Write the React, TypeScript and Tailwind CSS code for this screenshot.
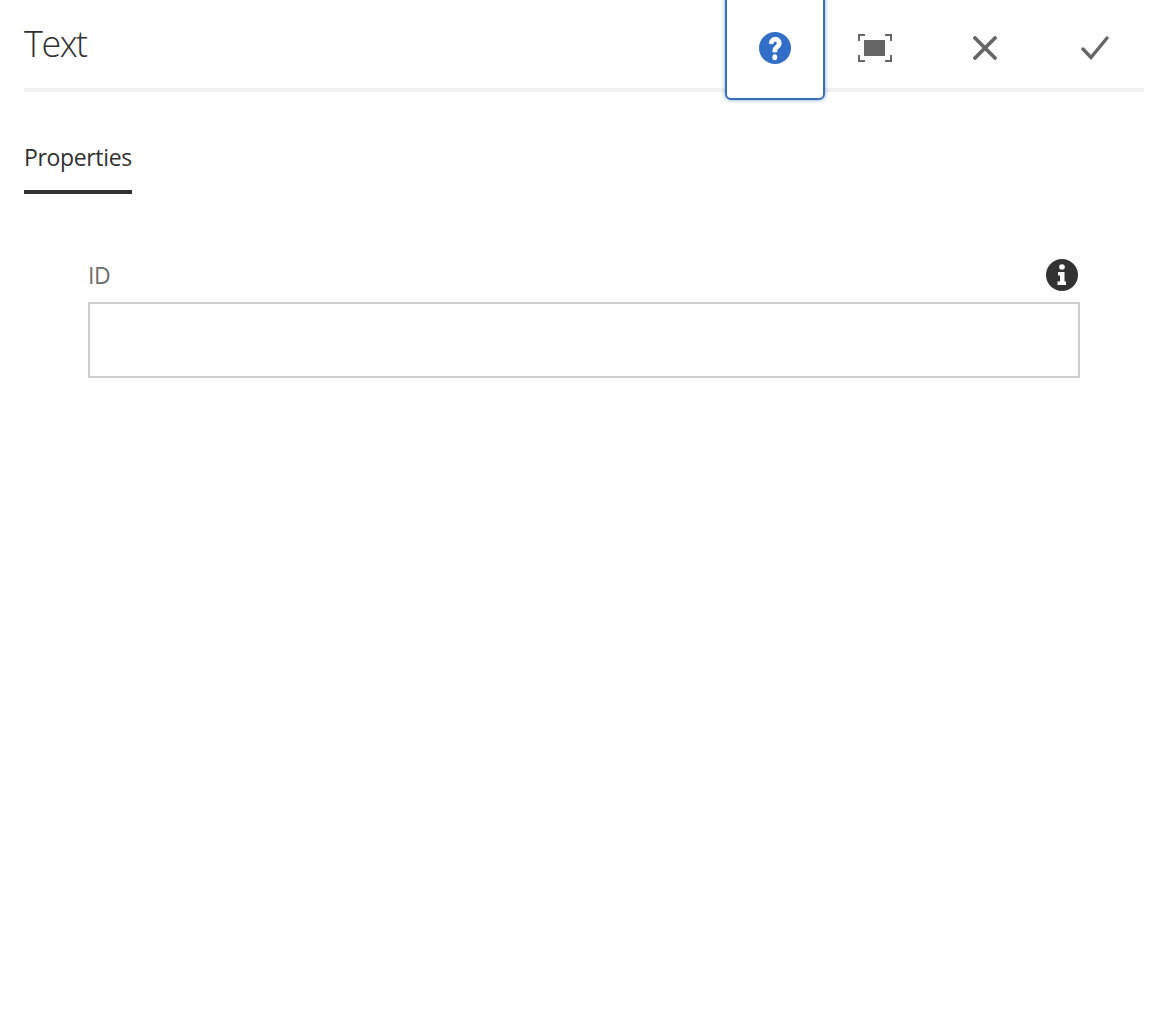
const font = { fontFamily: '"Open Sans", sans-serif' };

const HelpIcon = () => (
  <svg width="32" height="32" viewBox="0 0 32 32">
    <circle cx="16" cy="16" r="16" fill="#326ec8" />
    <g transform="translate(16 16) scale(1.1 1.32) translate(-16 -16)">
      <path d="M10.800 12.600c.3-3 2.400-4.700 5.500-4.700 3.200 0 5.300 1.800 5.300 4.400 0 2-1.100 3.100-2.500 4.100-1.200.9-1.500 1.300-1.500 2.600h-3.500c-.1-2.200.5-3.300 2-4.400 1.200-.9 1.800-1.400 1.800-2.200 0-.9-.7-1.500-1.700-1.500-1.100 0-1.900.7-2 1.900z" fill="#fff" stroke="#fff" strokeWidth="0.700" />
      <circle cx="15.800" cy="23" r="2.200" fill="#fff" />
    </g>
  </svg>
);

const FullscreenIcon = () => (
  <svg width="34" height="28" viewBox="0 0 34 28" fill="none">
    <rect x="6" y="6" width="21" height="16" fill="#666" />
    <path d="M1 7V1H7M27 1h6V7M1 21v6H7M27 27h6V21" stroke="#666" strokeWidth="2" />
  </svg>
);

const CloseIcon = () => (
  <svg width="24" height="24" viewBox="0 0 24 24" fill="none">
    <path d="M2 2L22 22M22 2L2 22" stroke="#666" strokeWidth="3.800" strokeLinecap="round" />
  </svg>
);

const CheckIcon = () => (
  <svg width="28" height="24" viewBox="0 0 28 24" fill="none">
    <path d="M2 13L10 21.500L26 2" stroke="#666" strokeWidth="3.400" strokeLinecap="round" strokeLinejoin="miter" />
  </svg>
);

const InfoIcon = () => (
  <svg width="32" height="32" viewBox="0 0 32 32">
    <circle cx="16" cy="16" r="16" fill="#323232" />
    <circle cx="16" cy="8" r="2.800" fill="#fff" />
    <path d="M12 13h6.500v9.500h1.500V26h-8.500v-3.500h2.500v-6h-2z" fill="#fff" />
  </svg>
);

export default function App() {
  return (
    <div className="min-h-[1032px] bg-white pr-[14px] pl-6" style={font}>
      {/* Dialog header */}
      <div className="flex h-[92px] items-start justify-between border-b-4 border-[#f1f1f1]">
        <h1 className="mt-[20px] text-[36px] leading-[48px] font-light tracking-[-1.500px] text-[#323232]">Text</h1>
        <div className="-mr-px flex">
          <button className="relative z-10 -mt-1 flex h-[104px] w-[100px] items-center justify-center rounded-b-[6px] border-2 border-[#3a6fb8] bg-white shadow-[0_0_4px_#326ec8a0]">
            <HelpIcon />
          </button>
          <button className="flex h-[96px] w-[100px] items-center justify-center">
            <FullscreenIcon />
          </button>
          <button className="ml-[10px] flex h-[96px] w-[100px] items-center justify-center">
            <CloseIcon />
          </button>
          <button className="ml-[10px] flex h-[96px] w-[100px] items-center justify-center">
            <CheckIcon />
          </button>
        </div>
      </div>

      {/* Tabs */}
      <div className="mt-[47px] flex">
        <div className="border-b-4 border-[#323232] pb-[15px] text-[23px] leading-[36px] tracking-[-0.350px] text-[#323232]">Properties</div>
      </div>

      {/* Form */}
      <div className="mt-[65px] ml-16 w-[992px]">
        <div className="flex items-center justify-between">
          <label className="text-[23px] leading-[32px] tracking-[-0.500px] text-[#6e6e6e]">ID</label>
          <span className="mr-[2px]">
            <InfoIcon />
          </span>
        </div>
        <div className="mt-[11px] h-[76px] border-2 border-[#cfcfcf] bg-white" />
      </div>
    </div>
  );
}
